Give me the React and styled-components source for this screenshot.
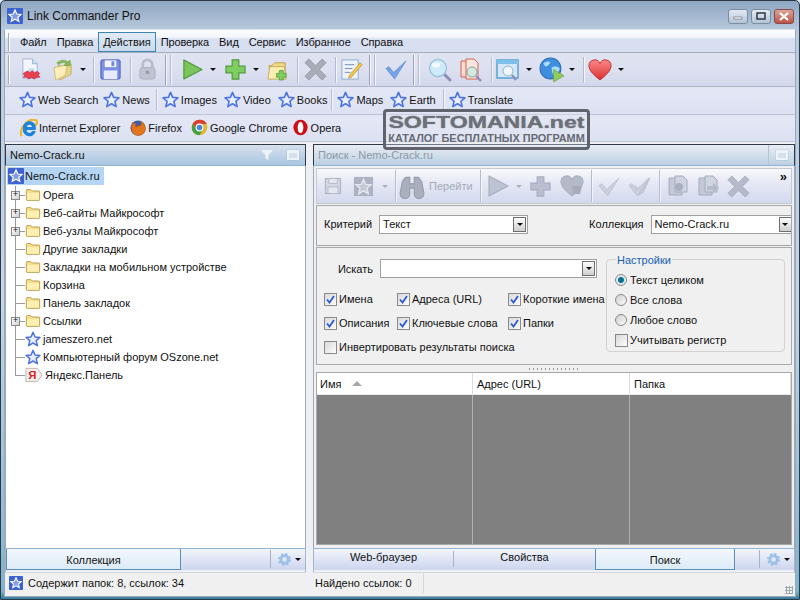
import React from 'react'
import styled, { createGlobalStyle } from 'styled-components'

const Global = createGlobalStyle`
  html, body { margin: 0; padding: 0; background: #dfe8f3; }
  #root { width: 800px; height: 600px; overflow: hidden; }
  * { box-sizing: border-box; }
`

const Window = styled.div`
  position: relative;
  width: 800px;
  height: 600px;
  display: flex;
  flex-direction: column;
  overflow: hidden;
  font-family: "Liberation Sans", Arial, sans-serif;
  font-size: 11px;
  color: #111;
  background: linear-gradient(180deg, #8fa6c2 0, #b8cadd 30px, #c4d6e8 300px, #7fb4cf 590px, #1f6f8f 600px);
  border: 1px solid #2c3a48;
  border-radius: 5px 5px 0 0;
`

const TitleBar = styled.div`
  height: 28px;
  flex: none;
  display: flex;
  align-items: center;
  padding: 2px 5px 0 6px;
  gap: 4px;
  font-size: 12px;
  color: #111;
`

const TitleText = styled.div`
  flex: 1;
`

const WinButtons = styled.div`
  display: flex;
  gap: 3px;
`

const WinButton = styled.div`
  width: 20px;
  height: 15px;
  border: 1px solid ${p => (p.$close ? '#8a4a4a' : '#7a8ca0')};
  border-radius: 3px;
  background: ${p => (p.$close ? 'linear-gradient(180deg,#dca79e,#bb5244)' : 'linear-gradient(180deg,#e2eaf3,#b4c5d6)')};
  display: flex;
  align-items: center;
  justify-content: center;
`

const Frame = styled.div`
  flex: 1;
  min-height: 0;
  margin: 0 3px 2px 3px;
  display: flex;
  flex-direction: column;
  background: #f0f0f0;
  border: 1px solid #9aa8b8;
  border-top-color: #dfe5ec;
  border-radius: 2px 2px 0 0;
`

const MenuBar = styled.div`
  height: 23px;
  flex: none;
  display: flex;
  align-items: center;
  padding: 2px 0 0 3px;
  background: linear-gradient(180deg, #fbfcfe 0, #f4f6fb 7px, #d9e0f1 9px, #d7def0 100%);
  border-bottom: 1px solid #a7afc0;
`

const MenuItem = styled.div`
  height: 20px;
  padding: 0 4px;
  display: flex;
  align-items: center;
  border: 1px solid ${p => (p.$active ? '#3d86b0' : 'transparent')};
  background: ${p => (p.$active ? 'linear-gradient(180deg,#e2ecf6,#c9d9ec)' : 'transparent')};
  font-size: 11px;
  letter-spacing: -0.1px;
  white-space: nowrap;
`

const BarGrip = styled.span`
  flex: none;
  width: 1px;
  height: ${p => p.$h || 18}px;
  margin-right: ${p => p.$r || 0}px;
  background: #a0a8bb;
  box-shadow: 1px 0 0 #fff;
`

const Toolbar = styled.div`
  height: 34px;
  flex: none;
  display: flex;
  align-items: center;
  padding-left: 3px;
  background: linear-gradient(180deg, #dfe3f1 0, #dce0f0 50%, #d2d8ec 100%);
  border-bottom: 1px solid #aeb6c8;
`

const Slot = styled.div`
  width: ${p => p.$w}px;
  height: 30px;
  flex: none;
  display: flex;
  align-items: center;
  justify-content: center;
`

const Caret = styled.span`
  flex: none;
  width: 0;
  height: 0;
  border-left: 3px solid transparent;
  border-right: 3px solid transparent;
  border-top: 3px solid ${p => p.$color || '#111'};
`

const Sep = styled.span`
  flex: none;
  align-self: center;
  width: 1px;
  height: ${p => p.$h || 26}px;
  margin: 0 ${p => p.$r ?? 4}px 0 ${p => p.$l ?? 4}px;
  background: ${p => (p.$dark ? '#9aa2b6' : '#b5bccd')};
  box-shadow: 1px 0 0 #f4f6fb;
`

const LinkRow = styled.div`
  height: ${p => p.$h}px;
  flex: none;
  display: flex;
  align-items: center;
  padding: 0 0 ${p => p.$pb}px ${p => p.$pad}px;
  background: linear-gradient(180deg, #e3e7f5, #dde2f3);
  border-bottom: 1px solid #bcc3d6;
`

const LinkItem = styled.div`
  display: flex;
  align-items: center;
  gap: ${p => p.$gap ?? 2}px;
  margin-right: ${p => p.$mr ?? 7}px;
  font-size: 11px;
  white-space: nowrap;
`

const Main = styled.div`
  flex: 1;
  min-height: 0;
  display: flex;
  background: #eef0f5;
  padding-top: 2px;
`

const LeftPane = styled.div`
  width: 301px;
  flex: none;
  display: flex;
  flex-direction: column;
`

const RightPane = styled.div`
  width: 482px;
  margin-left: 7px;
  flex: none;
  display: flex;
  flex-direction: column;
  min-width: 0;
`

const PaneHeader = styled.div`
  height: 22px;
  flex: none;
  display: flex;
  align-items: center;
  padding-left: 4px;
  color: ${p => (p.$dim ? '#8d98a8' : '#111')};
  border: 1px solid #2f3a46;
  border-bottom: 1px solid #8fb4d4;
  background: ${p => (p.$dim ? 'linear-gradient(180deg,#e8edf3,#bcd0e2)' : 'linear-gradient(180deg,#d8e0ec,#a9c6e2)')};
`

const HeaderTitle = styled.div`
  flex: 1;
`

const HeaderBtn = styled.div`
  width: 26px;
  height: 20px;
  display: flex;
  align-items: center;
  justify-content: center;
  border-left: 1px solid ${p => (p.$line ? '#b3c3d3' : 'transparent')};
`

const MiniBox = styled.span`
  width: 12px;
  height: 10px;
  background: #d5e0ec;
  border: 2px solid #edf3f9;
  border-top-width: 3px;
  box-shadow: 0 0 1px #8aa;
`

const Tree = styled.div`
  flex: 1;
  min-height: 0;
  background: #fff;
  border-left: 1px solid #9aa8b8;
  border-right: 1px solid #9aa8b8;
  padding: 1px 0 0 1px;
`

const RootNode = styled.div`
  width: 97px;
  height: 18px;
  display: flex;
  align-items: center;
  gap: 1px;
  margin-bottom: 1px;
  padding-left: 1px;
  background: #b4d6f4;
  font-size: 11px;
`

const TreeRow = styled.div`
  position: relative;
  height: 18px;
  display: flex;
  align-items: center;
  padding-left: 18px;
  gap: 2px;
  font-size: 11px;
  white-space: nowrap;

  &::before {
    content: '';
    position: absolute;
    left: 8px;
    top: 0;
    height: ${p => (p.$last ? '9px' : '18px')};
    border-left: 1px solid #9a9a9a;
  }
  &::after {
    content: '';
    position: absolute;
    left: 8px;
    top: 9px;
    width: 10px;
    border-top: 1px solid #9a9a9a;
  }
`

const Expander = styled.span`
  position: absolute;
  z-index: 1;
  left: 4px;
  top: 5px;
  width: 9px;
  height: 9px;
  border: 1px solid #8a8a8a;
  background: linear-gradient(135deg, #fff, #cfcfcf);
  display: flex;
  align-items: center;
  justify-content: center;
  font: 9px/7px "Liberation Mono", monospace;
  color: #111;
`

const TabBar = styled.div`
  height: 24px;
  flex: none;
  display: flex;
  background: linear-gradient(180deg, #f2f5fb, #cdd6ef 90%, #eef0f5 91%);
  border-left: 1px solid #a8b5c8;
  border-right: 1px solid #a8b5c8;
  border-top: 1px solid #8fb4d4;
`

const Tab = styled.div`
  width: ${p => p.$w}px;
  flex: none;
  display: flex;
  align-items: ${p => (p.$active ? 'flex-end' : 'center')};
  justify-content: center;
  padding-bottom: ${p => (p.$active ? '3px' : '7px')};
  font-size: 11px;
  color: #111;
  background: ${p => (p.$active ? 'linear-gradient(180deg,#f3f7fc,#dcebf7)' : 'transparent')};
  border: ${p => (p.$active ? '1px solid #5b8db5' : 'none')};
  border-top: none;
  margin-bottom: ${p => (p.$active ? '2px' : '0')};
`

const TabSep = styled.span`
  width: 1px;
  height: 16px;
  margin-top: 2px;
  background: #aab3c6;
  flex: none;
`

const TabFill = styled.div`
  flex: 1;
`

const TabTools = styled.div`
  width: 35px;
  flex: none;
  display: flex;
  align-items: center;
  gap: 4px;
  padding-left: 7px;
  border-left: 1px solid #aab3c6;
  margin: 1px 0 4px;
`

const StatusBar = styled.div`
  height: 24px;
  flex: none;
  display: flex;
  align-items: center;
  background: #f0f0f0;
  padding: 0 0 3px ${p => p.$pad}px;
  gap: 5px;
  border-top: 1px solid #d4d8e0;
  font-size: 11px;
  position: relative;
`

const StatusCell = styled.div`
  width: ${p => p.$w}px;
  height: 100%;
  display: flex;
  align-items: center;
  padding-left: 2px;
  border-right: 1px solid #d8d8d8;
`

const Resize = styled.span`
  position: absolute;
  right: 2px;
  bottom: 2px;
  width: 8px;
  height: 8px;
  background: radial-gradient(circle, #9aa 1px, transparent 1.2px) 0 0 / 3px 3px;
`

const SearchBody = styled.div`
  flex: 1;
  min-height: 0;
  display: flex;
  flex-direction: column;
  padding: 2px 2px 3px 2px;
  background: #f0f0f0;
  border-left: 1px solid #9aa8b8;
  border-right: 1px solid #9aa8b8;
`

const SearchTools = styled.div`
  height: 36px;
  flex: none;
  position: relative;
  display: flex;
  align-items: center;
  padding-left: 3px;
  background: linear-gradient(180deg, #f8f9fc 0, #e6e9f5 40%, #d3d9ee 100%);
  border: 1px solid #c6c9d2;
`

const GoLabel = styled.span`
  color: #a5abb8;
  font-size: 11px;
  margin-left: 4px;
`

const More = styled.span`
  position: absolute;
  right: 4px;
  top: 0;
  font: bold 13px/16px "Liberation Sans", sans-serif;
  color: #111;
`

const Panel = styled.div`
  flex: none;
  height: ${p => p.$h}px;
  margin-top: 1px;
  border: 1px solid #a9a9a9;
  background: #f0f0f0;
  overflow: hidden;
`

const CriteriaRow = styled.div`
  height: 100%;
  display: flex;
  align-items: center;
  padding: 0 0 3px 7px;
  width: 500px;
`

const Label = styled.span`
  font-size: 11px;
  white-space: nowrap;
  margin-right: ${p => p.$mr || 6}px;
  margin-left: ${p => p.$ml || 0}px;
  width: ${p => (p.$w ? `${p.$w}px` : 'auto')};
  text-align: ${p => (p.$w ? 'right' : 'left')};
`

const Combo = styled.div`
  width: ${p => p.$w}px;
  height: 19px;
  flex: none;
  display: flex;
  align-items: center;
  justify-content: space-between;
  padding-left: 3px;
  background: #fff;
  border: 1px solid #a0a0a0;
  font-size: 11px;
`

const ComboArrow = styled.span`
  width: 13px;
  height: 15px;
  margin-right: 1px;
  display: flex;
  align-items: center;
  justify-content: center;
  background: linear-gradient(180deg, #fcfcfc, #cfcfcf);
  border: 1px solid #6f6f6f;
`

const SearchForm = styled.div`
  height: 100%;
  display: flex;
  padding: 11px 0 0 7px;
`

const FormLeft = styled.div`
  width: 282px;
  flex: none;
`

const SearchLine = styled.div`
  display: flex;
  align-items: center;
  margin-bottom: 9px;
`

const ChecksGrid = styled.div`
  display: grid;
  grid-template-columns: 73px 111px auto;
  grid-auto-rows: 24px;
  align-items: center;
`

const CheckLine = styled.label`
  display: flex;
  align-items: center;
  gap: 2px;
  font-size: 11px;
  white-space: nowrap;
  grid-column: ${p => (p.$wide ? '1 / span 3' : 'auto')};
`

const CheckBox = styled.span`
  width: 13px;
  height: 13px;
  flex: none;
  border: 1px solid #8a8a8a;
  background: linear-gradient(135deg, #d8d8d8, #fdfdfd);
  display: flex;
  align-items: center;
  justify-content: center;
`

const Group = styled.div`
  position: relative;
  width: 179px;
  height: 93px;
  flex: none;
  padding: 10px 0 0 8px;
  border: 1px solid #d6d0d0;
  border-radius: 4px;
`

const Legend = styled.span`
  position: absolute;
  top: -6px;
  left: 9px;
  padding: 0 1px;
  background: #f0f0f0;
  color: #1560b0;
  font-size: 11px;
`

const OptionLine = styled.div`
  height: 20px;
  display: flex;
  align-items: center;
  gap: 2px;
  font-size: 11px;
  white-space: nowrap;
`

const Radio = styled.span`
  width: 12px;
  height: 12px;
  flex: none;
  margin-right: 1px;
  border-radius: 50%;
  border: 1px solid #8a8a8a;
  background: ${p => (p.$on ? 'radial-gradient(circle,#0d6f90 0,#0d6f90 2.5px,#d8e8f0 3.5px,#e8e8e8 100%)' : 'linear-gradient(135deg,#cfcfcf,#fbfbfb)')};
`

const SplitDots = styled.div`
  height: 7px;
  flex: none;
  display: flex;
  align-items: center;
  justify-content: center;
  &::before {
    content: '';
    width: 50px;
    height: 2px;
    background: repeating-linear-gradient(90deg, #9a9a9a 0 1px, transparent 1px 4px);
  }
`

const Table = styled.div`
  flex: 1;
  min-height: 0;
  display: flex;
  flex-direction: column;
  border: 1px solid #a9a9a9;
`

const TableHead = styled.div`
  height: 22px;
  flex: none;
  display: grid;
  grid-template-columns: 156px 157px 1fr;
  background: #fff;
  border-bottom: 1px solid #e8e8e8;
`

const HeadCell = styled.div`
  display: flex;
  align-items: center;
  gap: 11px;
  padding-left: ${p => p.$pad || 4}px;
  border-right: 1px solid #dcdcdc;
  font-size: 11px;
`

const SortUp = styled.span`
  width: 0;
  height: 0;
  border-left: 5px solid transparent;
  border-right: 5px solid transparent;
  border-bottom: 5px solid #a8a8a8;
`

const TableBody = styled.div`
  flex: 1;
  display: grid;
  grid-template-columns: 156px 157px 1fr;
  background: #808080;
`

const BodyCol = styled.div`
  border-right: 1px solid #b0b0b0;
`

const Watermark = styled.div`
  position: absolute;
  left: 382px;
  top: 108px;
  width: 207px;
  height: 41px;
  border: 3px solid #5f636b;
  border-radius: 4px;
  background: rgba(228, 231, 240, 0.35);
  color: #6c7079;
  text-align: center;
  overflow: hidden;
`

const WmMain = styled.div`
  font: bold 17px/17px "Liberation Sans", sans-serif;
  white-space: nowrap;
  margin-top: 2px;
  transform: scaleX(1.36);
  text-shadow: 0 0 1px #6c7079;
`

const WmSub = styled.div`
  font: bold 10px/10px "Liberation Sans", sans-serif;
  white-space: nowrap;
  margin-top: 3px;
  transform: scaleX(1.09);
  color: #666a72;
`

/* icons */

const IconSvg = styled.svg`
  display: block;
  flex: none;
`

const Svg = ({ s = 16, children }) => (
  <IconSvg width={s} height={s} viewBox="0 0 24 24">{children}</IconSvg>
)

const STAR = 'M12 2 L15 9 L22.5 9.6 L16.8 14.5 L18.6 22 L12 18 L5.4 22 L7.2 14.5 L1.5 9.6 L9 9 Z'

const Star = ({ s = 17 }) => (
  <Svg s={s}><path d={STAR} fill="#e8eefb" stroke="#4a72e0" strokeWidth="2.2" strokeLinejoin="round" /></Svg>
)

const AppIcon = ({ s = 16 }) => (
  <IconSvg width={s} height={s} viewBox="0 0 16 16">
    <rect width="16" height="16" rx="1" fill="#3c63cf" />
    <path d="M8 2 L9.8 6 L14 6.4 L10.8 9.2 L11.8 13.4 L8 11.2 L4.2 13.4 L5.2 9.2 L2 6.4 L6.2 6 Z" fill="#7f9ce8" stroke="#fff" strokeWidth="1.2" />
  </IconSvg>
)

const Folder = ({ s = 16 }) => (
  <Svg s={s}>
    <path d="M2 7 V5 Q2 4 3 4 H9 L11 6 H21 Q22 6 22 7 V19 Q22 20 21 20 H3 Q2 20 2 19 Z" fill="#f5df8e" stroke="#b99a45" strokeWidth="1.4" />
    <path d="M3 9 H21 V19 H3 Z" fill="#fdf0b2" />
  </Svg>
)

const Yandex = () => (
  <IconSvg width="18" height="16" viewBox="0 0 19 16">
    <path d="M1 1 H13 L18 8 L13 15 H1 Z" fill="#f3f0ec" stroke="#bdb5ae" />
    <text x="3.5" y="12.5" fontSize="12" fontWeight="bold" fontFamily="Liberation Sans" fill="#d8232a">Я</text>
  </IconSvg>
)

const NewPage = () => (
  <Svg s={23}>
    <path d="M3 1 H13 L18 6 V21 H3 Z" fill="#f2f6fc" stroke="#9db4d6" />
    <path d="M13 1 V6 H18" fill="#c9daf0" stroke="#9db4d6" />
    <path d="M9 11 H15 V14 L9 16 Z" fill="#c4d8f0" />
    <path d="M5 15 L8 13.5 L10 15 L13 13.5 L15 15 L18 14 L20.5 16 L19 18 L21 20 L17.5 20 L15 22 L12 20.5 L9 22 L7 20 L3.5 20 L5 18 L3 16.5 Z" fill="#e8404f" stroke="#b02532" strokeWidth="0.6" />
  </Svg>
)

const OpenFolder = () => (
  <Svg s={23}>
    <path d="M7 8 H13 L15 6 H21 V17 L9 23 Z" fill="#e8d48a" stroke="#c4b06a" />
    <path d="M3 10 L17 7 L15 18 L5 23 Z" fill="#fbeebb" stroke="#d2bd78" />
    <path d="M6 5 Q12 0 18 4 L20 2 L20 8 L14 8 L16 6 Q12 3 8 7 Z" fill="#86bb58" stroke="#5a9335" strokeWidth="0.5" />
  </Svg>
)

const Save = () => (
  <Svg s={23}>
    <rect x="2" y="2" width="20" height="20" rx="1.5" fill="#7d90e2" stroke="#4258b8" />
    <rect x="6" y="2.5" width="12" height="7" fill="#f4f6fc" />
    <rect x="13" y="3.5" width="3" height="5" fill="#6f86e0" />
    <rect x="5" y="13" width="14" height="9" fill="#e6eafa" />
  </Svg>
)

const Lock = () => (
  <Svg s={23}>
    <path d="M7 11 V7 A5 5 0 0 1 17 7 V11" fill="none" stroke="#b9bdca" strokeWidth="3" />
    <rect x="4" y="10" width="16" height="12" rx="3" fill="#bfc4d0" stroke="#adb2bf" />
    <circle cx="12" cy="15" r="2" fill="#989eab" />
  </Svg>
)

const Play = ({ s = 23, dim }) => (
  <Svg s={s}>
    <path d="M3 2 L22 12 L3 22 Z" fill={dim ? '#bcc3d3' : '#7cc45c'} stroke={dim ? '#a8afc0' : '#4b9a38'} strokeWidth="1.2" strokeLinejoin="round" />
  </Svg>
)

const Plus = ({ s = 23, dim }) => (
  <Svg s={s}>
    <path d="M8.5 2 H15.5 V8.5 H22 V15.5 H15.5 V22 H8.5 V15.5 H2 V8.5 H8.5 Z" fill={dim ? '#b9bfcf' : '#7fcc62'} stroke={dim ? '#a6adc0' : '#4d9a3a'} strokeWidth="1.2" />
  </Svg>
)

const FolderPlus = () => (
  <Svg s={23}>
    <path d="M3 8 H6 L9 5 H20 V19 H5 Z" fill="#f1da86" stroke="#b9a050" />
    <path d="M2 22 L4 9 H19 L21 22 Z" fill="#fbeeb0" stroke="#c5ad60" />
    <path d="M14 13 H18 V16 H21 V20 H18 V23 H14 V20 H11 V16 H14 Z" fill="#82cc62" stroke="#4d9a3a" strokeWidth="0.8" />
  </Svg>
)

const Cross = ({ s = 23, light }) => (
  <Svg s={s}>
    <path d="M5 1 L12 8 L19 1 L23 5 L16 12 L23 19 L19 23 L12 16 L5 23 L1 19 L8 12 L1 5 Z" fill={light ? '#b5bbca' : '#a8adb8'} stroke={light ? '#a0a6b6' : '#8e939e'} strokeWidth="0.8" />
  </Svg>
)

const Note = () => (
  <Svg s={23}>
    <rect x="2" y="2" width="17" height="20" fill="#eef3fb" stroke="#8faacc" />
    <path d="M5 7 H15 M5 11 H13 M5 15 H11" stroke="#6f8db5" strokeWidth="1" />
    <path d="M10 18 L21 5 L23 7 L12 20 L9 21 Z" fill="#f3c94e" stroke="#b88a20" strokeWidth="0.7" />
  </Svg>
)

const Check = ({ s = 23, dim, dbl }) => (
  <Svg s={s}>
    {dbl && <path d="M7 11 L12 16 L23 3 L16 18 L12 21 Z" fill="#c3c9d8" stroke="#b0b7c8" strokeWidth="0.6" />}
    <path d="M1 11 L4 9 L9 15 L22 3 L10 22 Z" fill={dim ? '#c9cfdd' : '#74a4e6'} stroke={dim ? '#b4bbcb' : '#4f80c8'} strokeWidth="0.6" />
  </Svg>
)

const Lens = () => (
  <Svg s={24}>
    <path d="M15 15 L22 22" stroke="#8d8fb8" strokeWidth="3" strokeLinecap="round" />
    <circle cx="10" cy="10" r="8.5" fill="#cfeaf8" stroke="#9fc3da" strokeWidth="1.4" />
    <ellipse cx="8" cy="7" rx="4" ry="2.5" fill="#f4fbff" />
  </Svg>
)

const DocLens = () => (
  <Svg s={24}>
    <path d="M2 3 H10 V19 H2 Z" fill="#f9dcd3" stroke="#d4614c" />
    <path d="M7 1 H15 L19 5 V21 H7 Z" fill="#fbe6de" stroke="#d4614c" />
    <circle cx="13" cy="14" r="5" fill="#d4eadf" stroke="#8a9fa8" />
    <path d="M17 18 L22 23" stroke="#8d8fb8" strokeWidth="2.4" />
  </Svg>
)

const WinLens = () => (
  <Svg s={24}>
    <rect x="1" y="2" width="21" height="18" fill="#d5e8f8" stroke="#4f9fd0" strokeWidth="1.4" />
    <rect x="1" y="2" width="21" height="4" fill="#7fc0e8" />
    <circle cx="12" cy="13" r="5" fill="#eef7fd" stroke="#8fb3cc" />
    <path d="M16 17 L20 22" stroke="#8d8fb8" strokeWidth="2.4" />
  </Svg>
)

const Globe = () => (
  <Svg s={25}>
    <circle cx="11" cy="11" r="10" fill="#3f8fe0" stroke="#2a6bb5" />
    <path d="M4 6 Q8 3 11 5 Q9 9 6 9 Z M12 10 Q17 8 20 11 Q18 17 14 18 Q12 14 12 10 Z" fill="#a8dcf8" />
    <path d="M14 12 L24 18 L14 24 Z" fill="#92cc5c" stroke="#5f9a38" strokeWidth="0.6" />
  </Svg>
)

const Heart = ({ s = 24, dim }) => (
  <Svg s={s}>
    <defs>
      <linearGradient id="hg" x1="0" y1="0" x2="0" y2="1">
        <stop offset="0" stopColor="#f88" />
        <stop offset="1" stopColor="#d83030" />
      </linearGradient>
    </defs>
    <path d="M12 22 C3 15 1 11 1 7.5 A5.7 5.7 0 0 1 12 5.5 A5.7 5.7 0 0 1 23 7.5 C23 11 21 15 12 22 Z" fill={dim ? '#b4bac8' : 'url(#hg)'} stroke={dim ? '#a5acbc' : '#c03030'} />
    {dim && <path d="M12 12 H22 L20 20 H13 Z" fill="#a6acbb" />}
  </Svg>
)

const Binoculars = () => (
  <Svg s={26}>
    <path d="M3 8 L6 4 H10 V10 H14 V4 H18 L21 8 L23 19 A4.5 4.5 0 0 1 14 19 L14 14 H10 L10 19 A4.5 4.5 0 0 1 1 19 Z" fill="#a9afbd" stroke="#969cab" />
  </Svg>
)

const DimSave = () => (
  <Svg s={20}>
    <rect x="3" y="3" width="18" height="18" fill="#d4d8e4" stroke="#afb5c4" strokeWidth="1.4" />
    <rect x="7" y="3" width="10" height="6" fill="#e4e7ef" stroke="#afb5c4" />
    <rect x="6" y="13" width="12" height="8" fill="#e4e7ef" stroke="#afb5c4" />
  </Svg>
)

const DimStarBox = () => (
  <Svg s={23}>
    <rect x="2" y="2" width="20" height="20" fill="#adb3c2" />
    <path d={STAR} transform="translate(3 3) scale(.75)" fill="#c4c9d6" stroke="#e4e7ef" strokeWidth="2" />
  </Svg>
)

const DimDocs = ({ arrow }) => (
  <Svg s={24}>
    <path d="M3 4 H12 L16 8 V21 H3 Z" fill="#c3c9d8" stroke="#a5acbc" />
    <path d="M9 2 H17 L21 6 V18 H9 Z" fill="#cfd4e1" stroke="#a5acbc" />
    {arrow ? <path d="M11 12 H17 V9 L23 14 L17 19 V16 H11 Z" fill="#b5bbcb" /> : <circle cx="13" cy="13" r="4" fill="#a8afbf" />}
  </Svg>
)

const Funnel = () => (
  <IconSvg width="12" height="12" viewBox="0 0 12 12">
    <path d="M0 1 H12 L7.5 6 V11 L4.5 9.5 V6 Z" fill="#eef3f9" />
  </IconSvg>
)

const Gear = () => (
  <Svg s={13}>
    <circle cx="12" cy="12" r="7" fill="none" stroke="#9cc0e8" strokeWidth="5" />
    <circle cx="12" cy="12" r="10" fill="none" stroke="#9cc0e8" strokeWidth="4" strokeDasharray="4 3.9" />
  </Svg>
)

const IE = () => (
  <Svg s={18}>
    <path d="M2 23 Q-1 15 7 6 Q16 -2 22 2 Q24 5 20 9" fill="none" stroke="#eeb52f" strokeWidth="3" />
    <path d="M4 13 A8.5 8.5 0 0 1 21 10 L21 14.5 H9 A3.6 3.6 0 0 0 16 16 H21 A8.5 8.5 0 0 1 4 13 Z M9 10.5 H16 A3.6 3.6 0 0 0 9 10.5 Z" fill="#1f84d8" fillRule="evenodd" />
  </Svg>
)

const Firefox = () => (
  <Svg s={18}>
    <circle cx="12" cy="12" r="10" fill="#3b5fa8" />
    <path d="M5 4 Q4 8 3 11 Q3 22 13 22 Q22 21 22 12 Q21 5 15 3 Q18 7 15 9 Q11 8 10 11 Q8 9 9 6 Q6 7 5 4 Z" fill="#e2761b" stroke="#b04e10" strokeWidth="0.6" />
  </Svg>
)

const Chrome = () => (
  <Svg s={17}>
    <circle cx="12" cy="12" r="11" fill="#e2b92e" />
    <path d="M12 1 A11 11 0 0 0 2.5 6.5 L7.5 14 L12 7 H22.5 A11 11 0 0 0 12 1 Z" fill="#d8412f" />
    <path d="M2.5 6.5 A11 11 0 0 0 12 23 L16.5 15.5 H8 Z" fill="#45a045" />
    <circle cx="12" cy="12" r="5.5" fill="#fff" />
    <circle cx="12" cy="12" r="4" fill="#4a86d8" />
  </Svg>
)

const Opera = () => (
  <Svg s={17}>
    <ellipse cx="12" cy="12" rx="10" ry="11" fill="#cc0f16" />
    <ellipse cx="12" cy="12" rx="4" ry="8" fill="#fff" />
  </Svg>
)

const Tick = () => (
  <IconSvg width="9" height="9" viewBox="0 0 9 9">
    <path d="M1 4.5 L3.5 7.5 L8 1" fill="none" stroke="#2a5ad0" strokeWidth="1.8" />
  </IconSvg>
)

const Check2 = ({ children, on, wide }) => (
  <CheckLine $wide={wide}><CheckBox>{on && <Tick />}</CheckBox>{children}</CheckLine>
)

const TreeItem = ({ exp, icon, last, children }) => (
  <TreeRow $last={last}>
    {exp && <Expander>+</Expander>}
    {icon}
    <span>{children}</span>
  </TreeRow>
)

const CaretSlot = ({ w, color }) => <Slot $w={w}><Caret $color={color} /></Slot>

const App = () => (
  <Window>
    <Global />
    <TitleBar>
      <AppIcon />
      <TitleText>Link Commander Pro</TitleText>
      <WinButtons>
        <WinButton>
          <svg width="10" height="8"><rect x="1" y="5" width="8" height="2" fill="#fff" stroke="#445" strokeWidth="0.5" /></svg>
        </WinButton>
        <WinButton>
          <svg width="10" height="8"><rect x="1" y="1" width="8" height="6" fill="none" stroke="#334" strokeWidth="1.5" /></svg>
        </WinButton>
        <WinButton $close>
          <svg width="10" height="9"><path d="M1 1 L9 8 M9 1 L1 8" stroke="#fff" strokeWidth="2.2" /></svg>
        </WinButton>
      </WinButtons>
    </TitleBar>
    <Frame>
      <MenuBar>
        <BarGrip $r={6} />
        <MenuItem>Файл</MenuItem>
        <MenuItem>Правка</MenuItem>
        <MenuItem $active>Действия</MenuItem>
        <MenuItem>Проверка</MenuItem>
        <MenuItem>Вид</MenuItem>
        <MenuItem>Сервис</MenuItem>
        <MenuItem>Избранное</MenuItem>
        <MenuItem>Справка</MenuItem>
      </MenuBar>
      <Toolbar>
        <BarGrip $h={29} $r={7} />
        <Slot $w={30}><NewPage /></Slot>
        <Slot $w={32}><OpenFolder /></Slot>
        <CaretSlot w={10} />
        <Sep $l={5} $r={4} />
        <Slot $w={24}><Save /></Slot>
        <Sep $l={8} $r={4} />
        <Slot $w={24}><Lock /></Slot>
        <Sep $l={6} $r={4} $h={30} $dark />
        <Sep $l={0} $r={9} $h={30} />
        <Slot $w={24}><Play /></Slot>
        <CaretSlot w={18} />
        <Slot $w={26}><Plus /></Slot>
        <CaretSlot w={16} />
        <Slot $w={26}><FolderPlus /></Slot>
        <Sep $l={7} $r={5} />
        <Slot $w={24}><Cross /></Slot>
        <Sep $l={8} $r={3} />
        <Slot $w={24}><Note /></Slot>
        <Sep $l={6} $r={4} $h={30} $dark />
        <Sep $l={0} $r={9} $h={30} />
        <Slot $w={24}><Check /></Slot>
        <Sep $l={5} $r={4} $h={30} $dark />
        <Sep $l={0} $r={6} $h={30} />
        <Slot $w={30}><Lens /></Slot>
        <Slot $w={32}><DocLens /></Slot>
        <Sep $l={4} $r={4} />
        <Slot $w={24}><WinLens /></Slot>
        <CaretSlot w={18} />
        <Slot $w={26}><Globe /></Slot>
        <CaretSlot w={16} />
        <Sep $l={3} $r={4} />
        <Slot $w={24}><Heart /></Slot>
        <CaretSlot w={18} />
      </Toolbar>
      <LinkRow $h={28} $pad={14} $pb={2}>
        <LinkItem $mr={5}><Star />Web Search</LinkItem>
        <LinkItem $mr={6}><Star />News</LinkItem>
        <Sep $h={22} $l={0} $r={5} />
        <LinkItem><Star />Images</LinkItem>
        <LinkItem><Star />Video</LinkItem>
        <LinkItem $mr={4}><Star />Books</LinkItem>
        <Sep $h={22} $l={0} $r={5} />
        <LinkItem><Star />Maps</LinkItem>
        <LinkItem><Star />Earth</LinkItem>
        <Sep $h={22} $l={0} $r={5} />
        <LinkItem><Star />Translate</LinkItem>
      </LinkRow>
      <LinkRow $h={27} $pad={15} $pb={1}>
        <LinkItem $gap={1} $mr={9}><IE />Internet Explorer</LinkItem>
        <LinkItem $gap={1} $mr={9}><Firefox />Firefox</LinkItem>
        <LinkItem $mr={4}><Chrome />Google Chrome</LinkItem>
        <LinkItem><Opera />Opera</LinkItem>
      </LinkRow>
      <Main>
        <LeftPane>
          <PaneHeader>
            <HeaderTitle>Nemo-Crack.ru</HeaderTitle>
            <HeaderBtn><Funnel /></HeaderBtn>
            <HeaderBtn><MiniBox /></HeaderBtn>
          </PaneHeader>
          <Tree>
            <RootNode><AppIcon />Nemo-Crack.ru</RootNode>
            <TreeItem exp icon={<Folder />}>Opera</TreeItem>
            <TreeItem exp icon={<Folder />}>Веб-сайты Майкрософт</TreeItem>
            <TreeItem exp icon={<Folder />}>Веб-узлы Майкрософт</TreeItem>
            <TreeItem icon={<Folder />}>Другие закладки</TreeItem>
            <TreeItem icon={<Folder />}>Закладки на мобильном устройстве</TreeItem>
            <TreeItem icon={<Folder />}>Корзина</TreeItem>
            <TreeItem icon={<Folder />}>Панель закладок</TreeItem>
            <TreeItem exp icon={<Folder />}>Ссылки</TreeItem>
            <TreeItem icon={<Star s={16} />}>jameszero.net</TreeItem>
            <TreeItem icon={<Star s={16} />}>Компьютерный форум OSzone.net</TreeItem>
            <TreeItem last icon={<Yandex />}>Яндекс.Панель</TreeItem>
          </Tree>
          <TabBar>
            <Tab $active $w={175}>Коллекция</Tab>
            <TabFill />
            <TabTools><Gear /><Caret /></TabTools>
          </TabBar>
          <StatusBar $pad={4}><AppIcon s={14} />Содержит папок: 8, ссылок: 34</StatusBar>
        </LeftPane>
        <RightPane>
          <PaneHeader $dim>
            <HeaderTitle>Поиск - Nemo-Crack.ru</HeaderTitle>
            <HeaderBtn $line><MiniBox /></HeaderBtn>
          </PaneHeader>
          <SearchBody>
            <SearchTools>
              <Slot $w={26}><DimSave /></Slot>
              <Slot $w={34}><DimStarBox /></Slot>
              <CaretSlot w={10} color="#aab0c0" />
              <Sep $h={32} $l={5} $r={3} />
              <Binoculars />
              <GoLabel>Перейти</GoLabel>
              <Sep $h={32} $l={7} $r={6} />
              <Slot $w={22}><Play s={24} dim /></Slot>
              <CaretSlot w={20} color="#aab0c0" />
              <Slot $w={24}><Plus dim /></Slot>
              <Slot $w={38}><Heart dim /></Slot>
              <Sep $h={32} $l={0} $r={6} />
              <Slot $w={24}><Check dim /></Slot>
              <Slot $w={36}><Check dim dbl /></Slot>
              <Sep $h={32} $l={1} $r={4} />
              <Slot $w={28}><DimDocs /></Slot>
              <Slot $w={32}><DimDocs arrow /></Slot>
              <Slot $w={30}><Cross light /></Slot>
              <More>»</More>
            </SearchTools>
            <Panel $h={41}>
              <CriteriaRow>
                <Label $mr={7}>Критерий</Label>
                <Combo $w={149}>Текст<ComboArrow><Caret /></ComboArrow></Combo>
                <Label $ml={61} $mr={7}>Коллекция</Label>
                <Combo $w={143}>Nemo-Crack.ru<ComboArrow><Caret /></ComboArrow></Combo>
              </CriteriaRow>
            </Panel>
            <Panel $h={118}>
              <SearchForm>
                <FormLeft>
                  <SearchLine>
                    <Label $w={49} $mr={7}>Искать</Label>
                    <Combo $w={217}><span /><ComboArrow><Caret /></ComboArrow></Combo>
                  </SearchLine>
                  <ChecksGrid>
                    <Check2 on>Имена</Check2>
                    <Check2 on>Адреса (URL)</Check2>
                    <Check2 on>Короткие имена</Check2>
                    <Check2 on>Описания</Check2>
                    <Check2 on>Ключевые слова</Check2>
                    <Check2 on>Папки</Check2>
                    <Check2 wide>Инвертировать результаты поиска</Check2>
                  </ChecksGrid>
                </FormLeft>
                <Group>
                  <Legend>Настройки</Legend>
                  <OptionLine><Radio $on />Текст целиком</OptionLine>
                  <OptionLine><Radio />Все слова</OptionLine>
                  <OptionLine><Radio />Любое слово</OptionLine>
                  <OptionLine><CheckBox />Учитывать регистр</OptionLine>
                </Group>
              </SearchForm>
            </Panel>
            <SplitDots />
            <Table>
              <TableHead>
                <HeadCell $pad={3}>Имя<SortUp /></HeadCell>
                <HeadCell>Адрес (URL)</HeadCell>
                <HeadCell>Папка</HeadCell>
              </TableHead>
              <TableBody>
                <BodyCol />
                <BodyCol />
                <div />
              </TableBody>
            </Table>
          </SearchBody>
          <TabBar>
            <Tab $w={139}>Web-браузер</Tab>
            <TabSep />
            <Tab $w={141}>Свойства</Tab>
            <Tab $active $w={140}>Поиск</Tab>
            <TabFill />
            <TabTools><Gear /><Caret /></TabTools>
          </TabBar>
          <StatusBar $pad={0}>
            <StatusCell $w={111}>Найдено ссылок: 0</StatusCell>
            <Resize />
          </StatusBar>
        </RightPane>
      </Main>
    </Frame>
    <Watermark>
      <WmMain>SOFTOMANIA.net</WmMain>
      <WmSub>КАТАЛОГ БЕСПЛАТНЫХ ПРОГРАММ</WmSub>
    </Watermark>
  </Window>
)

export default App
